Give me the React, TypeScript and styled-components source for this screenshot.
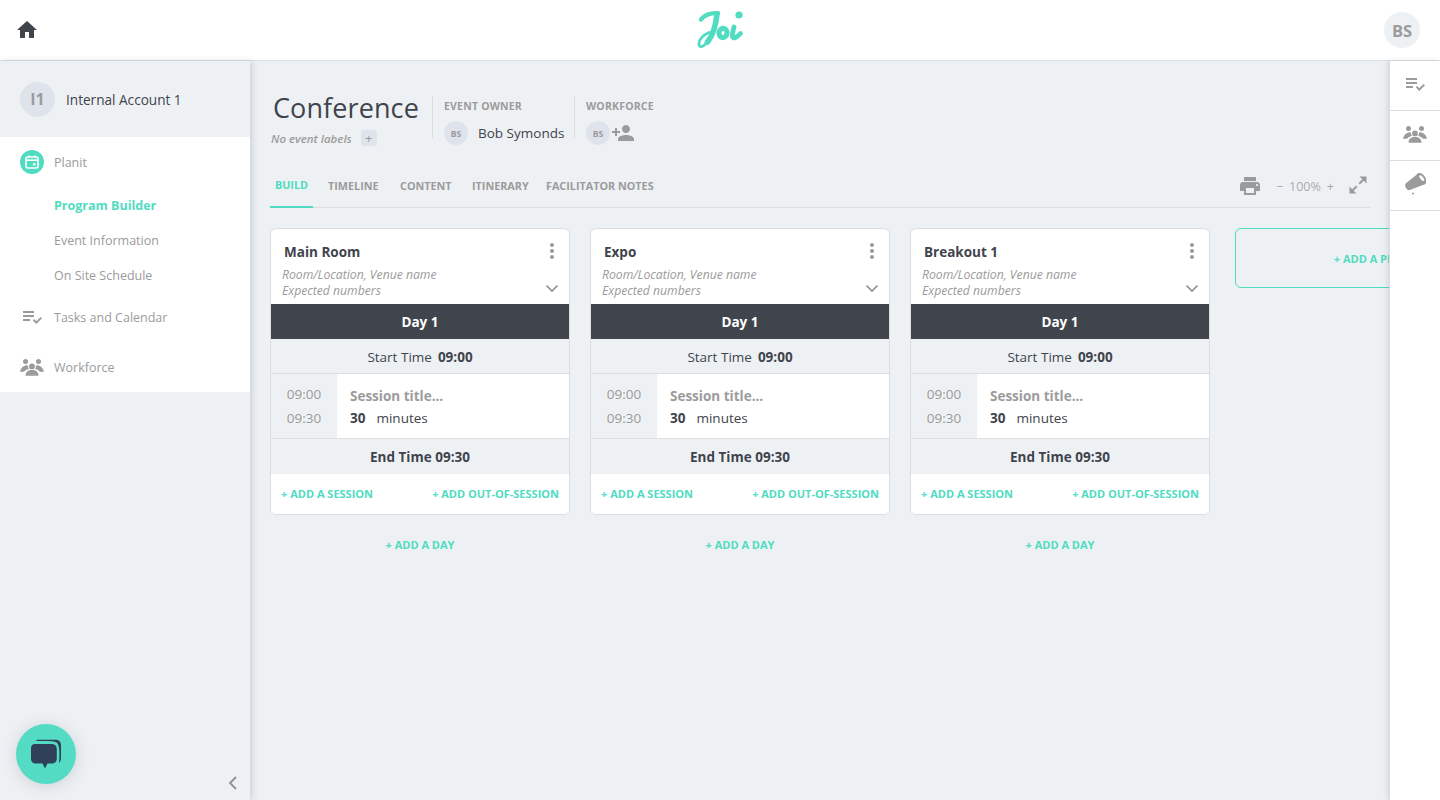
import React from "react";
import styled, { createGlobalStyle } from "styled-components";
import { MdHome, MdPlaylistAddCheck, MdPrint, MdPersonAdd, MdMoreVert } from "react-icons/md";

const FONT = `"Open Sans", "Noto Sans", "Liberation Sans", sans-serif`;
const TEAL = "#4fdcc1";
const DARK = "#3f444d";
const GREY = "#9b9b9b";
const BG = "#eef1f4";
const LINE = "#dcdddf";

const Global = createGlobalStyle`
  html, body { margin: 0; padding: 0; height: 100%; }
  body { font-family: ${FONT}; background: ${BG}; color: ${DARK}; }
  * { box-sizing: border-box; }
  #root { height: 800px; }
`;

const Page = styled.div`
  width: 1440px; height: 800px; display: flex; flex-direction: column; overflow: hidden;
`;
const TopBar = styled.header`
  height: 61px; flex: none; background: #fff; border-bottom: 1px solid ${LINE};
  display: grid; grid-template-columns: 1fr auto 1fr; align-items: center; padding: 0 20px 0 15px;
`;
const HomeButton = styled.div`
  color: ${DARK}; display: flex; font-size: 24px; margin-top: -1px;
`;
const LogoWrap = styled.div`
  display: flex; margin-left: 6px;
`;
const UserAvatar = styled.div`
  width: 36px; height: 36px; border-radius: 50%; background: ${BG}; color: ${GREY}; justify-self: end;
  display: flex; align-items: center; justify-content: center; font-size: 16.5px; font-weight: 700;
`;
const Body = styled.div`
  flex: 1; display: flex; min-height: 0;
`;
const Sidebar = styled.aside`
  width: 250px; flex: none; display: flex; flex-direction: column; position: relative; background: ${BG};
  box-shadow: 3px 0 6px rgba(60, 70, 85, 0.16); z-index: 1;
`;
const Account = styled.div`
  height: 76px; display: flex; align-items: center; gap: 11px; padding-left: 20px; font-size: 13.6px; color: ${DARK};
`;
const AccountAvatar = styled.div`
  width: 35px; height: 35px; border-radius: 50%; background: #dfe4ec; color: ${GREY};
  display: flex; align-items: center; justify-content: center; font-size: 16px; font-weight: 700;
`;
const Nav = styled.nav`
  background: #fff; height: 255px; display: flex; flex-direction: column;
`;
const NavItem = styled.div<{ $h: number }>`
  height: ${(p) => p.$h}px; display: flex; align-items: center; padding-left: 20px; gap: 10px; font-size: 12.5px; color: ${GREY};
`;
const NavIcon = styled.div`
  width: 24px; height: 24px; display: flex; align-items: center; justify-content: center; color: ${GREY}; font-size: 24px; flex: none;
`;
const SubItem = styled.div<{ $active?: boolean }>`
  height: 35px; display: flex; align-items: center; padding-left: 54px; padding-top: 2px; font-size: 12.5px;
  color: ${(p) => (p.$active ? TEAL : GREY)}; font-weight: ${(p) => (p.$active ? 700 : 400)};
`;
const CalendarBadge = styled.div`
  width: 24px; height: 24px; border-radius: 50%; background: ${TEAL}; display: flex; align-items: center; justify-content: center;
`;
const ChatBubble = styled.div`
  position: absolute; left: 16px; bottom: 16px; width: 60px; height: 60px; border-radius: 50%; background: #53dcc3;
  display: flex; align-items: center; justify-content: center; box-shadow: 0 2px 16px rgba(60, 70, 85, 0.18);
`;
const Collapse = styled.div`
  position: absolute; left: 228px; bottom: 10px; display: flex;
`;
const Main = styled.main`
  flex: 1; min-width: 0; padding: 0 0 0 20px; overflow: hidden; display: flex; flex-direction: column;
`;
const EventHeader = styled.div`
  height: 91px; display: flex; padding-top: 35px; flex: none;
`;
const TitleBlock = styled.div`
  width: 162px; padding-left: 3px; display: flex; flex-direction: column;
`;
const Title = styled.div`
  font-size: 27px; line-height: 24px; height: 27px; color: ${DARK}; letter-spacing: 0.1px;
`;
const Labels = styled.div`
  display: flex; align-items: center; gap: 9px; margin-top: 7px; margin-left: -2px; font-size: 11.5px; font-style: italic; font-weight: 600; color: ${GREY}; white-space: nowrap;
`;
const PlusBox = styled.div`
  width: 16px; height: 16px; border-radius: 3px; background: #dfe4ec; color: ${GREY}; font-style: normal; font-weight: 400;
  display: flex; align-items: center; justify-content: center; font-size: 13px;
`;
const Group = styled.div<{ $w: number }>`
  width: ${(p) => p.$w}px; height: 42px; border-left: 1px solid ${LINE}; padding-left: 11px; display: flex; flex-direction: column;
`;
const GroupLabel = styled.div`
  font-size: 10.5px; font-weight: 700; color: ${GREY}; line-height: 14px; letter-spacing: 0.2px; margin-top: 3px; white-space: nowrap;
`;
const GroupRow = styled.div`
  display: flex; align-items: center; margin-top: 8px; font-size: 13.5px; color: ${DARK}; white-space: nowrap;
`;
const MiniAvatar = styled.div`
  width: 24px; height: 24px; border-radius: 50%; background: #dfe4ec; color: ${GREY}; font-size: 8.5px; font-weight: 700;
  display: flex; align-items: center; justify-content: center; margin-right: 10px; flex: none;
`;
const AddPerson = styled.div`
  display: flex; align-items: center; color: ${GREY}; margin-left: -9px; font-size: 24px;
`;
const TabBar = styled.div`
  width: 1100px; height: 56px; flex: none; border-bottom: 1px solid ${LINE}; display: flex; align-items: stretch;
`;
const Tab = styled.div<{ $active?: boolean; $w: number }>`
  width: ${(p) => p.$w}px; display: flex; align-items: center; justify-content: ${(p) => (p.$active ? "center" : "flex-start")};
  font-size: 10.8px; font-weight: 700; white-space: nowrap; padding-top: ${(p) => (p.$active ? 11 : 12)}px;
  color: ${(p) => (p.$active ? TEAL : GREY)};
  border-bottom: 2px solid ${(p) => (p.$active ? TEAL : "transparent")}; margin-bottom: -1px;
`;
const TabGap = styled.div`
  width: 15px;
`;
const Tools = styled.div`
  margin-left: auto; display: flex; align-items: center; color: ${GREY}; font-size: 12.5px; padding-right: 2px; padding-top: 13px;
`;
const PrintIcon = styled.div`
  font-size: 24px; display: flex; margin-right: 14px; color: ${GREY};
`;
const Zoom = styled.div`
  display: flex; gap: 6px; color: #a9abae; margin-right: 14px;
`;
const ExpandIcon = styled.div`
  display: flex; margin-top: -2px;
`;
const Board = styled.div`
  display: flex; gap: 20px; padding-top: 20px; align-items: flex-start;
`;
const Column = styled.div`
  width: 300px; flex: none; display: flex; flex-direction: column; align-items: stretch;
`;
const Card = styled.div`
  background: #fff; border: 1px solid ${LINE}; border-radius: 6px; overflow: hidden;
`;
const CardHead = styled.div`
  height: 75px; padding: 13px 0 0 11px; position: relative;
`;
const CardTitle = styled.div`
  font-size: 13.5px; font-weight: 700; color: ${DARK}; line-height: 20px; padding-left: 2px;
`;
const MetaBlock = styled.div`
  margin-top: 5px;
`;
const CardMeta = styled.div`
  font-size: 12.2px; font-style: italic; color: ${GREY}; line-height: 16px; white-space: nowrap;
`;
const Kebab = styled.div`
  position: absolute; right: 5px; top: 10px; font-size: 24px; color: ${GREY}; display: flex;
`;
const Chevron = styled.div`
  position: absolute; right: 10px; top: 55px; display: flex;
`;
const DayBar = styled.div`
  height: 35px; background: ${DARK}; color: #fff; font-weight: 700; font-size: 13.5px; display: flex; align-items: center; justify-content: center;
`;
const TimeBar = styled.div<{ $bold?: boolean }>`
  height: 35px; background: ${BG}; border-bottom: ${(p) => (p.$bold ? "0" : `1px solid ${LINE}`)};
  display: flex; align-items: center; justify-content: center; gap: 6px; font-size: 13.5px; color: ${DARK};
  font-weight: ${(p) => (p.$bold ? 700 : 400)}; padding-top: 1px;
  b { font-weight: 700; }
`;
const Session = styled.div`
  height: 65px; display: flex; border-bottom: 1px solid ${LINE};
`;
const Times = styled.div`
  width: 66px; background: ${BG}; color: ${GREY}; font-size: 13.5px; line-height: 24px; display: flex; flex-direction: column; align-items: center; justify-content: center;
`;
const SessionBody = styled.div`
  flex: 1; background: #fff; padding: 11px 0 0 13px;
`;
const SessionTitle = styled.div`
  font-size: 13.5px; font-weight: 700; color: ${GREY}; line-height: 22px;
`;
const Duration = styled.div`
  font-size: 13.5px; color: ${DARK}; line-height: 22px; display: flex; gap: 11px;
  b { font-weight: 700; }
`;
const Actions = styled.div`
  height: 40px; display: flex; align-items: center; justify-content: space-between; padding: 0 10px 2px; background: #fff;
`;
const AddLink = styled.div`
  color: ${TEAL}; font-size: 11px; font-weight: 700; white-space: nowrap;
`;
const AddDay = styled(AddLink)`
  text-align: center; margin-top: 22px; line-height: 16px;
`;
const AddPhase = styled.div`
  width: 300px; height: 60px; flex: none; margin-left: 5px; border: 1px solid ${TEAL}; border-radius: 6px; display: flex; align-items: center; justify-content: center;
  color: ${TEAL}; font-size: 11px; font-weight: 700; white-space: nowrap;
`;
const Rail = styled.aside`
  width: 51px; flex: none; background: #fff; border-left: 1px solid ${LINE}; box-shadow: -2px 0 5px rgba(60, 70, 85, 0.14); display: flex; flex-direction: column; z-index: 1;
`;
const RailItem = styled.div`
  height: 50px; border-bottom: 1px solid ${LINE}; display: flex; align-items: center; justify-content: center; color: ${GREY}; font-size: 24px; padding-bottom: 3px;
`;

const Logo = () => (
  <svg width="48" height="40" viewBox="0 0 48 40" fill="none" stroke="#4fdcc1" strokeLinecap="round" strokeLinejoin="round">
    <path d="M4 9.5C8 4.5 14 2.8 21 3.2" strokeWidth="4.4" />
    <path d="M20 4C19 14 15.5 26 10.5 32" strokeWidth="5.6" />
    <path d="M10 32C6.5 37.5 2 38 1.8 34C1.8 30 6 25 12 22.5" strokeWidth="2.8" />
    <ellipse cx="26" cy="23" rx="4" ry="4.6" strokeWidth="5.2" transform="rotate(12 26 23)" />
    <path d="M37 17C36 21 35 24.5 35.5 26.5C36 29 39.5 28 43.5 23.5" strokeWidth="4.8" />
    <circle cx="42" cy="5" r="3.6" fill="#4fdcc1" stroke="none" />
  </svg>
);
const CalendarIcon = () => (
  <svg width="16" height="16" viewBox="0 0 16 16" fill="none" stroke="#fff">
    <rect x="2" y="3" width="12" height="11" rx="1.6" strokeWidth="1.6" />
    <path d="M2.5 6.2H13.5" strokeWidth="1.6" />
    <path d="M5 1.5V3.5M11 1.5V3.5" strokeWidth="1.6" />
    <rect x="9" y="9.4" width="2.6" height="2" fill="#fff" stroke="none" />
  </svg>
);
const ChatIcon = () => (
  <svg width="32" height="30" viewBox="0 0 32 30">
    <path d="M6.5 0.8H25C29 0.8 31 2.6 31 6.5V19C31 21 30.3 23 29 24C29.6 18 29.6 13 29 8.5C28.4 4 26.4 2.4 22 2.2C17 2 11 2 6.5 2Z" fill="#2f4058" />
    <path d="M5.5 5H21C25 5 26.8 6.5 26.8 10.5V19C26.8 23 25 24.5 21 24.5H17.5L15 29.5L12.5 24.5H6.5C2.5 24.5 1 23 1 19V10C1 6.5 2.2 5 5.5 5Z" fill="#2f4058" />
  </svg>
);
const Megaphone = () => (
  <svg width="21" height="22" viewBox="0 0 21 22">
    <path d="M0.6 10.5L12.5 1L20.5 11L4.8 17C2 18 -0.8 13.5 0.6 10.5Z" fill="#9b9b9b" />
    <ellipse cx="16.4" cy="5.6" rx="4" ry="6.4" transform="rotate(-38 16.4 5.6)" fill="#9b9b9b" />
    <ellipse cx="16.8" cy="5.2" rx="1.5" ry="3.4" transform="rotate(-38 16.8 5.2)" fill="#fff" />
    <circle cx="8" cy="20.6" r="1" fill="#9b9b9b" />
  </svg>
);
const ExpandArrows = () => (
  <svg width="20" height="20" viewBox="0 0 20 20" fill="#9b9b9b" stroke="none">
    <path d="M1.5 18.5V11.5L8.5 18.5Z" />
    <path d="M18.5 1.5V8.5L11.5 1.5Z" />
    <path d="M4.5 15.5L8.8 11.2M11.2 8.8L15.5 4.5" stroke="#9b9b9b" strokeWidth="2" fill="none" />
  </svg>
);
const GroupIcon = () => (
  <svg width="24" height="17" viewBox="0 0 24 17" fill="#9b9b9b">
    <circle cx="5.5" cy="2.6" r="2.5" />
    <circle cx="18.5" cy="2.6" r="2.5" />
    <circle cx="12" cy="7.4" r="2.9" />
    <path d="M5.5 16.8C5.5 13 8 11 12 11C16 11 18.5 13 18.5 16.8Z" />
    <path d="M0 12.8C1 8.5 3.6 6.2 7.6 6.2C8 7.6 8.4 9 9 9.8C6.5 10.6 5 11.6 4 12.8Z" />
    <path d="M24 12.8C23 8.5 20.4 6.2 16.4 6.2C16 7.6 15.6 9 15 9.8C17.5 10.6 19 11.6 20 12.8Z" />
  </svg>
);
const ChevronDown = () => (
  <svg width="14" height="9" viewBox="0 0 14 9" fill="none" stroke="#8f8f8f" strokeWidth="1.6">
    <path d="M1.5 1.5L7 7L12.5 1.5" />
  </svg>
);
const ChevronLeft = () => (
  <svg width="10" height="14" viewBox="0 0 10 14" fill="none" stroke="#8f8f8f" strokeWidth="1.8">
    <path d="M8 1L2 7L8 13" />
  </svg>
);

const rooms = ["Main Room", "Expo", "Breakout 1"];

export default function App() {
  return (
    <Page>
      <Global />
      <TopBar>
        <HomeButton><MdHome /></HomeButton>
        <LogoWrap><Logo /></LogoWrap>
        <UserAvatar>BS</UserAvatar>
      </TopBar>
      <Body>
        <Sidebar>
          <Account>
            <AccountAvatar>I1</AccountAvatar>
            <span>Internal Account 1</span>
          </Account>
          <Nav>
            <NavItem $h={50}>
              <NavIcon><CalendarBadge><CalendarIcon /></CalendarBadge></NavIcon>
              Planit
            </NavItem>
            <SubItem $active>Program Builder</SubItem>
            <SubItem>Event Information</SubItem>
            <SubItem>On Site Schedule</SubItem>
            <NavItem $h={50}>
              <NavIcon><MdPlaylistAddCheck /></NavIcon>
              Tasks and Calendar
            </NavItem>
            <NavItem $h={50}>
              <NavIcon><GroupIcon /></NavIcon>
              Workforce
            </NavItem>
          </Nav>
          <ChatBubble><ChatIcon /></ChatBubble>
          <Collapse><ChevronLeft /></Collapse>
        </Sidebar>
        <Main>
          <EventHeader>
            <TitleBlock>
              <Title>Conference</Title>
              <Labels>No event labels <PlusBox>+</PlusBox></Labels>
            </TitleBlock>
            <Group $w={142}>
              <GroupLabel>EVENT OWNER</GroupLabel>
              <GroupRow><MiniAvatar>BS</MiniAvatar>Bob Symonds</GroupRow>
            </Group>
            <Group $w={120}>
              <GroupLabel>WORKFORCE</GroupLabel>
              <GroupRow>
                <MiniAvatar>BS</MiniAvatar>
                <AddPerson><MdPersonAdd /></AddPerson>
              </GroupRow>
            </Group>
          </EventHeader>
          <TabBar>
            <Tab $active $w={43}>BUILD</Tab>
            <TabGap />
            <Tab $w={72}>TIMELINE</Tab>
            <Tab $w={72}>CONTENT</Tab>
            <Tab $w={74}>ITINERARY</Tab>
            <Tab $w={120}>FACILITATOR NOTES</Tab>
            <Tools>
              <PrintIcon><MdPrint /></PrintIcon>
              <Zoom><span>−</span><span>100%</span><span>+</span></Zoom>
              <ExpandIcon><ExpandArrows /></ExpandIcon>
            </Tools>
          </TabBar>
          <Board>
            {rooms.map((r) => (
              <Column key={r}>
                <Card>
                  <CardHead>
                    <CardTitle>{r}</CardTitle>
                    <MetaBlock>
                      <CardMeta>Room/Location, Venue name</CardMeta>
                      <CardMeta>Expected numbers</CardMeta>
                    </MetaBlock>
                    <Kebab><MdMoreVert /></Kebab>
                    <Chevron><ChevronDown /></Chevron>
                  </CardHead>
                  <DayBar>Day 1</DayBar>
                  <TimeBar>Start Time <b>09:00</b></TimeBar>
                  <Session>
                    <Times><span>09:00</span><span>09:30</span></Times>
                    <SessionBody>
                      <SessionTitle>Session title...</SessionTitle>
                      <Duration><b>30</b> minutes</Duration>
                    </SessionBody>
                  </Session>
                  <TimeBar $bold>End Time 09:30</TimeBar>
                  <Actions>
                    <AddLink>+ ADD A SESSION</AddLink>
                    <AddLink>+ ADD OUT-OF-SESSION</AddLink>
                  </Actions>
                </Card>
                <AddDay>+ ADD A DAY</AddDay>
              </Column>
            ))}
            <AddPhase>+ ADD A PROGRAM</AddPhase>
          </Board>
        </Main>
        <Rail>
          <RailItem><MdPlaylistAddCheck /></RailItem>
          <RailItem><GroupIcon /></RailItem>
          <RailItem><Megaphone /></RailItem>
        </Rail>
      </Body>
    </Page>
  );
}
